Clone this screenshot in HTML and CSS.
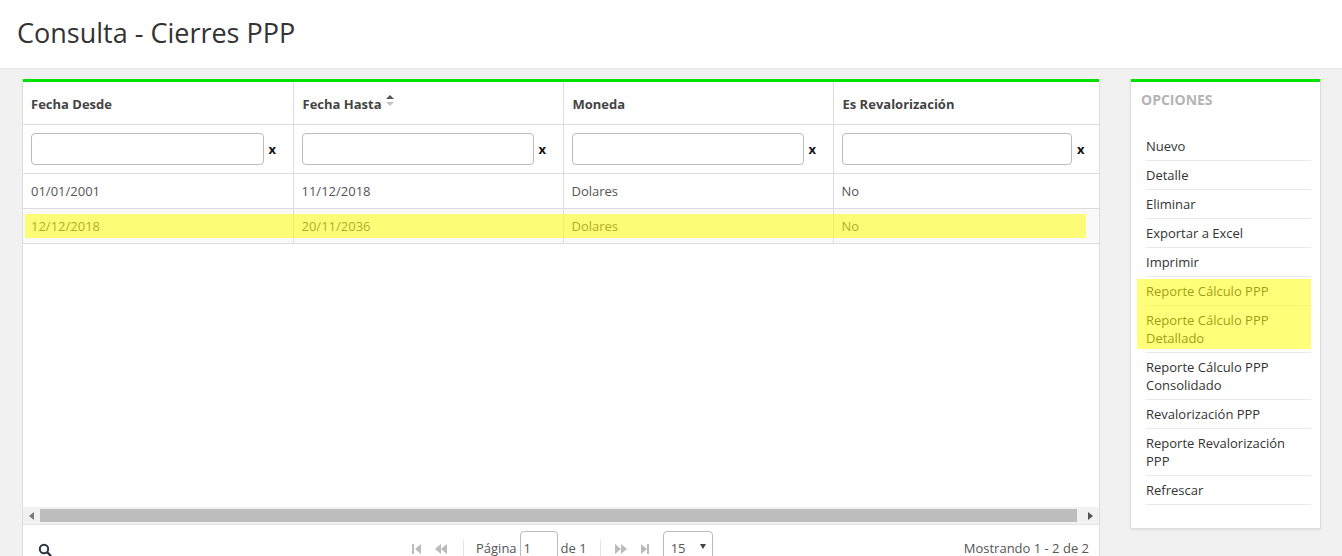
FILE: index.html
```html
<!DOCTYPE html>
<html lang="es">
<head>
<meta charset="utf-8">
<title>Consulta - Cierres PPP</title>
<link rel="stylesheet" href="styles.css">
</head>
<body>
<header class="page-head"><h1>Consulta - Cierres PPP</h1></header>
<main class="content">
  <section class="panel grid-panel">
    <table class="grid">
      <colgroup><col class="c1"><col class="c2"><col class="c3"><col class="c4"></colgroup>
      <thead>
        <tr class="titles">
          <th>Fecha Desde</th>
          <th>Fecha Hasta <svg class="sort" width="8" height="12" viewBox="0 0 8 12"><path d="M4 0l4 4H0z" fill="#555"/><path d="M4 11l4-4H0z" fill="#c4c4c4"/></svg></th>
          <th>Moneda</th>
          <th>Es Revalorización</th>
        </tr>
        <tr class="filters">
          <td><div class="filter"><input type="text"><b>x</b></div></td>
          <td><div class="filter"><input type="text"><b>x</b></div></td>
          <td><div class="filter"><input type="text"><b>x</b></div></td>
          <td><div class="filter"><input type="text"><b>x</b></div></td>
        </tr>
      </thead>
      <tbody>
        <tr><td>01/01/2001</td><td>11/12/2018</td><td>Dolares</td><td>No</td></tr>
        <tr class="alt"><td>12/12/2018</td><td>20/11/2036</td><td>Dolares</td><td>No</td></tr>
      </tbody>
    </table>
    <div class="grid-space"></div>
    <div class="hscroll">
      <svg class="arrow" width="6" height="8" viewBox="0 0 6 8"><path d="M5 0v8L0 4z" fill="#777"/></svg>
      <div class="thumb"></div>
      <svg class="arrow" width="6" height="8" viewBox="0 0 6 8"><path d="M1 0v8l5-4z" fill="#555"/></svg>
    </div>
    <footer class="pager">
      <svg class="search" width="14" height="14" viewBox="0 0 14 14"><circle cx="6" cy="6" r="4.2" fill="none" stroke="#2c3440" stroke-width="2"/><path d="M9 9l4 4" stroke="#2c3440" stroke-width="2.4"/></svg>
      <div class="pager-center">
        <svg class="pg" width="9" height="10" viewBox="0 0 9 10"><path d="M0 0h2v10H0zM9 0v10L3 5z"/></svg>
        <svg class="pg gap" width="12" height="10" viewBox="0 0 12 10"><path d="M6 0v10L0 5zM12 0v10L6 5z"/></svg>
        <span class="sep"></span>
        <span>Página</span><span class="page-box">1</span><span>de 1</span>
        <span class="sep sep-next"></span>
        <svg class="pg" width="12" height="10" viewBox="0 0 12 10"><path d="M0 0v10l6-5zM6 0v10l6-5z"/></svg>
        <svg class="pg gap" width="8" height="10" viewBox="0 0 8 10"><path d="M0 0v10l6-5zM6 0h2v10H6z"/></svg>
        <span class="size-box">15<svg width="6" height="5" viewBox="0 0 6 5"><path d="M0 0h6L3 5z" fill="#444"/></svg></span>
      </div>
      <span class="count">Mostrando 1 - 2 de 2</span>
    </footer>
    <div class="mark mark-row"></div>
  </section>
  <aside class="panel side">
    <h2>OPCIONES</h2>
    <ul>
      <li>Nuevo</li>
      <li>Detalle</li>
      <li>Eliminar</li>
      <li>Exportar a Excel</li>
      <li>Imprimir</li>
      <li>Reporte Cálculo PPP</li>
      <li>Reporte Cálculo PPP Detallado</li>
      <li>Reporte Cálculo PPP Consolidado</li>
      <li>Revalorización PPP</li>
      <li>Reporte Revalorización PPP</li>
      <li>Refrescar</li>
    </ul>
    <div class="mark mark-side"></div>
  </aside>
</main>
</body>
</html>
```
FILE: styles.css
```css
* { box-sizing: border-box; }
html, body { margin: 0; height: 556px; overflow: hidden; }
body { background: #f1f1f1; font: 13px/18px "Open Sans", sans-serif; color: #555; }
.page-head { height: 69px; background: #fff; border-bottom: 1px solid #e4e4e4; padding: 14px 17px 0; }
h1 { margin: 0; font-size: 27px; line-height: 38px; font-weight: 400; color: #333; }
.content { display: flex; align-items: flex-start; gap: 30px; padding: 10px 0 0 22px; }
.panel { position: relative; background: #fff; border: 1px solid #ddd; border-top: 3px solid #00e000; border-radius: 2px 2px 0 0; }
.grid-panel { width: 1078px; height: 479px; flex: none; display: flex; flex-direction: column; }
.grid { border-collapse: collapse; table-layout: fixed; width: 1076px; flex: none; }
.c1 { width: 270px; } .c2 { width: 270px; } .c3 { width: 270px; } .c4 { width: 266px; }
.grid th, .grid td { border: 1px solid #ddd; padding: 0 8px; text-align: left; }
.grid tr > :first-child { border-left: 0; }
.grid tr > :last-child { border-right: 0; padding-right: 6px; }
.grid thead tr:first-child th { border-top: 0; }
.titles th { height: 42px; padding-top: 2px; font-weight: 700; color: #444; }
.titles th + th { padding-left: 9px; }
.sort { vertical-align: 2px; margin-left: 1px; }
.filters td { height: 49px; }
.filter { display: flex; align-items: center; gap: 4px; }
.filter input { flex: 1; min-width: 0; height: 32px; margin: 0; background: #fff; border: 1px solid #bbb; border-radius: 4px; }
.filter b { width: 17px; padding-left: 1px; color: #111; font-size: 13px; }
.grid tbody td { height: 35px; }
.alt td { background: #f9f9f9; }
.grid-space { flex: 1; }
.hscroll { height: 17px; background: #f1f1f1; border-bottom: 1px solid #e4e4e4; display: flex; align-items: center; box-sizing: content-box; flex: none; }
.arrow { flex: none; margin: 0 5px 0 6px; }
.hscroll .arrow:last-child { margin: 0 6px 0 10px; }
.thumb { flex: 1; height: 13px; background: #bdbdbd; }
.pager { height: 32px; flex: none; display: flex; position: relative; align-items: flex-start; padding: 6px 10px 0 15px; }
.search { margin-top: 12px; }
.pager-center { position: absolute; left: 389px; top: 6px; display: flex; align-items: flex-start; line-height: 34px; white-space: nowrap; }
.pg { fill: #bbb; margin-top: 13px; flex: none; }
.pg.gap { margin-left: 14px; }
.sep { width: 1px; height: 18px; background: #e4e4e4; margin: 9px 12px 0 16px; }
.sep-next { margin-left: 13px; margin-right: 14px; }
.page-box { width: 38px; height: 40px; border: 1px solid #bbb; border-radius: 4px; margin: 0 3px; padding-left: 3px; line-height: 32px; }
.size-box { width: 50px; height: 40px; border: 1px solid #bbb; border-radius: 4px; margin-left: 14px; padding: 0 6px 0 7px; display: flex; justify-content: space-between; line-height: 32px; }
.size-box svg { margin-top: 12px; }
.count { margin-left: auto; margin-top: 8px; }
.side { width: 191px; height: 450px; flex: none; padding: 8px 9px 0 10px; box-shadow: 0 1px 2px rgba(0,0,0,.08); }
h2 { margin: 0 0 22px; font-size: 14px; line-height: 20px; font-weight: 700; color: #b4b4b4; }
ul { list-style: none; margin: 0; padding: 0 0 0 5px; }
li { padding: 5px 0; border-bottom: 1px solid #e8e8ec; color: #333; }
.mark { position: absolute; background: rgba(255, 255, 0, .52); pointer-events: none; }
.mark-row { left: 2px; top: 132px; width: 1061px; height: 24px; }
.mark-side { left: 6px; top: 197px; width: 174px; height: 70px; }
```
